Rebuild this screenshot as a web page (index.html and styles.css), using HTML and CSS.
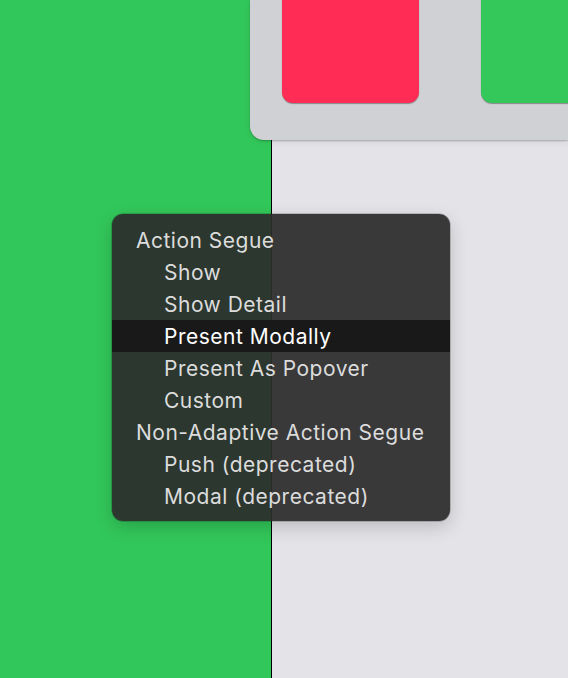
FILE: index.html
```html
<!DOCTYPE html>
<html>
<head>
<meta charset="utf-8">
<link rel="stylesheet" href="styles.css">
</head>
<body>
<div class="stage">
  <div class="left-pane"></div>
  <div class="right-pane"></div>
  <div class="card">
    <div class="swatch red"></div>
    <div class="swatch green"></div>
  </div>
  <div class="menu">
    <div class="item header">Action Segue</div>
    <div class="item">Show</div>
    <div class="item">Show Detail</div>
    <div class="item selected">Present Modally</div>
    <div class="item">Present As Popover</div>
    <div class="item">Custom</div>
    <div class="item header">Non-Adaptive Action Segue</div>
    <div class="item">Push (deprecated)</div>
    <div class="item">Modal (deprecated)</div>
  </div>
</div>
</body>
</html>
```
FILE: styles.css
```css
html, body {
  margin: 0;
  padding: 0;
  width: 568px;
  height: 678px;
  overflow: hidden;
}
.stage {
  position: relative;
  display: flex;
  width: 568px;
  height: 678px;
  overflow: hidden;
  font-family: Inter, "Noto Sans", sans-serif;
}
.left-pane {
  width: 271px;
  background: #32c75a;
  border-right: 1px solid #000;
}
.right-pane {
  flex: 1;
  background: #e4e4e8;
}
.card {
  position: absolute;
  left: 250px;
  top: 0;
  width: 318px;
  height: 140px;
  overflow: hidden;
  background: #d0d1d4;
  border-bottom-left-radius: 14px;
  box-shadow: 0 1px 2px rgba(0,0,0,0.25), 0 2px 8px rgba(0,0,0,0.06);
  display: flex;
  gap: 62px;
  padding-left: 32px;
  box-sizing: border-box;
}
.swatch {
  flex: 0 0 137px;
  height: 103px;
  border-bottom-left-radius: 11px;
  border-bottom-right-radius: 11px;
  box-shadow: 0 0.5px 1px rgba(0,0,0,0.35);
}
.swatch.red { background: #ff2d55; }
.swatch.green { background: #34c759; }
.menu {
  position: absolute;
  left: 112px;
  top: 214px;
  width: 338px;
  box-sizing: border-box;
  padding: 10px 0 9px;
  border-radius: 11px;
  background: rgba(44, 44, 44, 0.93);
  box-shadow: 0 0 0 0.5px rgba(0,0,0,0.35), 0 6px 18px rgba(0,0,0,0.18);
}
.item {
  height: 32px;
  line-height: 33px;
  font-size: 21px;
  letter-spacing: 0.5px;
  color: #dcdcdc;
  padding-left: 52px;
  white-space: nowrap;
}
.item.header {
  padding-left: 24px;
}
.item.selected {
  background: #191919;
  color: #ffffff;
}
```
